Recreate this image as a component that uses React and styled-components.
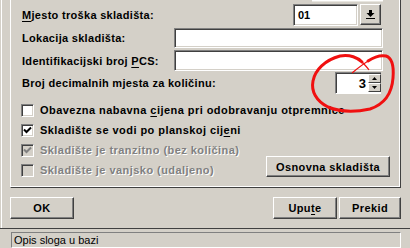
import styled, { createGlobalStyle } from "styled-components";

const GlobalStyle = createGlobalStyle`
    body {
        margin: 0;
        background: #d4d0c8;
        font-family: "Liberation Sans", Arial, sans-serif;
    }
`

const Window = styled.div`
    position: relative;
    width: 410px;
    height: 248px;
    overflow: hidden;
    background: #d4d0c8;
    display: flex;
    flex-direction: column;
`
const Main = styled.div`
    box-sizing: border-box;
    height: 228px;
    margin-left: 1px;
    border-left: 1px solid #fff;
    padding-left: 8px;
`
const GroupBox = styled.div`
    box-sizing: border-box;
    width: 391px;
    height: 188px;
    border-left: 1px solid #fff;
    border-right: 1px solid #404040;
    border-bottom: 1px solid #404040;
    box-shadow: inset -1px -1px #fff;
    padding: 0 17px 0 11px;
    display: flex;
    flex-direction: column;
`
const Stub = styled.div`
    align-self: flex-end;
    width: 71px;
    height: 1px;
    background: #fff;
    border-bottom: 1px solid #e8e6e0;
`
const FieldRow = styled.div`
    display: flex;
    align-items: center;
    height: ${p => p.$h}px;
    margin-top: ${p => p.$top}px;
`
const Label = styled.span`
    flex: 1;
    font-size: 11px;
    font-weight: bold;
    letter-spacing: 0.3px;
    color: #000;
    white-space: nowrap;
    u { text-decoration-thickness: 1px; text-underline-offset: 2px; }
`
const Field = styled.div`
    box-sizing: border-box;
    width: ${p => p.$w}px;
    height: ${p => p.$h}px;
    margin-right: ${p => p.$mr || 0}px;
    background: #fff;
    border: 1px solid;
    border-color: #808080 #fff #fff #808080;
    box-shadow: inset 1px 1px #404040, inset -1px -1px #d4d0c8;
    display: flex;
    align-items: center;
    padding: 0 4px;
    font-size: 11px;
    font-weight: bold;
    justify-content: ${p => p.$right ? "flex-end" : "flex-start"};
`
const RaisedButton = styled.button`
    box-sizing: border-box;
    width: ${p => p.$w}px;
    height: ${p => p.$h}px;
    padding: 0;
    margin: 0;
    background: #d4d0c8;
    border: 1px solid;
    border-color: #fff #404040 #404040 #fff;
    box-shadow: inset -1px -1px #808080;
    font-family: "Liberation Sans", Arial, sans-serif;
    font-size: 11px;
    font-weight: bold;
    letter-spacing: 0.4px;
    color: #000;
    display: flex;
    align-items: center;
    justify-content: center;
    u { text-decoration-thickness: 1px; text-underline-offset: 2px; }
`
const Combo = styled.div`
    display: flex;
    gap: 2px;
    margin-right: 2px;
    align-items: flex-start;
    align-self: flex-start;
`
const Spinner = styled.div`
    display: flex;
    margin-right: 2px;
`
const SpinField = styled(Field)`
    font-size: 13px;
    padding-right: 2px;
    border-right: none;
    box-shadow: inset 1px 1px #404040;
`
const SpinButtons = styled.div`
    box-sizing: border-box;
    display: flex;
    flex-direction: column;
    height: 22px;
    padding: 1px 0;
    background: #fff;
    border-bottom: 1px solid #fff;
    border-top: 1px solid #808080;
    box-shadow: inset 0 1px #404040;
`
const SpinButton = styled.div`
    box-sizing: border-box;
    width: 13px;
    height: 9px;
    background: #d4d0c8;
    border: 1px solid;
    border-color: #fff #404040 #404040 #fff;
    display: flex;
    align-items: center;
    justify-content: center;
`
const CheckList = styled.div`
    display: flex;
    flex-direction: column;
    margin-top: 6px;
`
const CheckRow = styled.div`
    display: flex;
    align-items: center;
    height: 20px;
`
const Box = styled.div`
    box-sizing: border-box;
    width: 13px;
    height: 13px;
    margin-left: -1px;
    background: ${p => p.$disabled ? "#d4d0c8" : "#fff"};
    border: 1px solid;
    border-color: #808080 #fff #fff #808080;
    box-shadow: inset 1px 1px #404040, inset -1px -1px #d4d0c8;
    display: flex;
    align-items: center;
    justify-content: center;
`
const CheckText = styled.span`
    margin-left: 6px;
    font-size: 11px;
    font-weight: bold;
    letter-spacing: 0.45px;
    white-space: nowrap;
    color: ${p => p.$disabled ? "#808080" : "#000"};
    text-shadow: ${p => p.$disabled ? "1px 1px #fff" : "none"};
    u { text-decoration-thickness: 1px; text-underline-offset: 2px; }
`
const Spacer = styled.div`
    flex: 1;
`
const SideButton = styled(RaisedButton)`
    align-self: flex-start;
    margin-top: -4px;
    margin-right: -7px;
`
const ButtonBar = styled.div`
    display: flex;
    margin-top: 9px;
    width: 391px;
    gap: 2px;
`
const Separator = styled.div`
    height: 1px;
    background: #404040;
`
const StatusBar = styled.div`
    flex: 1;
    padding: 3px 9px 0 11px;
    display: flex;
`
const StatusField = styled.div`
    box-sizing: border-box;
    flex: 1;
    border: 1px solid;
    border-color: #808080 #fff #fff #808080;
    padding: 1px 2px;
    font-size: 11px;
    color: #000;
`
const Overlay = styled.svg`
    position: absolute;
    left: 0;
    top: 0;
    pointer-events: none;
`

function Check({ checked, disabled }) {
    return (
        <Box $disabled={disabled}>
            {checked && (
                <svg width="9" height="9" viewBox="0 0 9 9">
                    <path d="M1 3.5 L3.5 6 L8 1.5" fill="none" stroke={disabled ? "#808080" : "#000"} strokeWidth="2" />
                </svg>
            )}
        </Box>
    )
}

function App() {
    return (
        <Window>
            <GlobalStyle />
            <Main>
                <GroupBox>
                    <Stub />
                    <FieldRow $h={22} $top={2}>
                        <Label><u>M</u>jesto troška skladišta:</Label>
                        <Combo>
                            <Field $w={65} $h={22}>01</Field>
                            <RaisedButton $w={21} $h={21}>
                                <svg width="9" height="10" viewBox="0 0 9 10">
                                    <rect x="3" y="0" width="3" height="3" fill="#000" />
                                    <path d="M0.5 3 H8.5 L4.5 7 Z" fill="#000" />
                                    <rect x="0" y="8" width="9" height="1" fill="#000" />
                                </svg>
                            </RaisedButton>
                        </Combo>
                    </FieldRow>
                    <FieldRow $h={20} $top={2}>
                        <Label>Lokacija skladišta:</Label>
                        <Field $w={209} $h={20} />
                    </FieldRow>
                    <FieldRow $h={21} $top={2}>
                        <Label>Identifikacijski broj <u>P</u>CS:</Label>
                        <Field $w={209} $h={21} />
                    </FieldRow>
                    <FieldRow $h={22} $top={1}>
                        <Label>Broj decimalnih mjesta za količinu:</Label>
                        <Spinner>
                            <SpinField $w={33} $h={22} $right>3</SpinField>
                            <SpinButtons>
                                <SpinButton>
                                    <svg width="5" height="3" viewBox="0 0 5 3"><path d="M2.5 0 L5 3 H0 Z" fill="#000" /></svg>
                                </SpinButton>
                                <SpinButton>
                                    <svg width="5" height="3" viewBox="0 0 5 3"><path d="M0 0 H5 L2.5 3 Z" fill="#000" /></svg>
                                </SpinButton>
                            </SpinButtons>
                        </Spinner>
                    </FieldRow>
                    <CheckList>
                        <CheckRow>
                            <Check />
                            <CheckText>Obavezna nabavna <u>c</u>ijena pri odobravanju otpremnice</CheckText>
                        </CheckRow>
                        <CheckRow>
                            <Check checked />
                            <CheckText>Skladište se vodi po planskoj cij<u>e</u>ni</CheckText>
                        </CheckRow>
                        <CheckRow>
                            <Check checked disabled />
                            <CheckText $disabled>Skladište je tranzitno (bez količina)</CheckText>
                        </CheckRow>
                        <CheckRow>
                            <Check disabled />
                            <CheckText $disabled>Skladište je vanjsko (udaljeno)</CheckText>
                            <Spacer />
                            <SideButton $w={124} $h={21}>Osnovna skladišta</SideButton>
                        </CheckRow>
                    </CheckList>
                </GroupBox>
                <ButtonBar>
                    <RaisedButton $w={64} $h={22}>OK</RaisedButton>
                    <Spacer />
                    <RaisedButton $w={64} $h={22}>Upu<u>t</u>e</RaisedButton>
                    <RaisedButton $w={62} $h={22}>Prekid</RaisedButton>
                </ButtonBar>
            </Main>
            <Separator />
            <StatusBar>
                <StatusField>Opis sloga u bazi</StatusField>
            </StatusBar>
            <Overlay width="410" height="248" viewBox="0 0 410 248">
                <path d="M352 73 C358 68, 364 63, 370 60" fill="none" stroke="#f01010" strokeWidth="1.2" />
                <path d="M368 61 C374 57, 381 55, 386 56 C392 58, 394 66, 393 78 C392 92, 385 104, 370 109 C356 112, 340 112, 328 107 C316 101, 311 91, 313 81 C315 70, 325 60, 340 56 C350 54, 358 58, 362 62" fill="none" stroke="#f01010" strokeWidth="3" strokeLinecap="round" />
                <path d="M361 61 C364 64, 367 67, 369 70" fill="none" stroke="#f01010" strokeWidth="1.2" />
            </Overlay>
        </Window>
    )
}

export default App;
